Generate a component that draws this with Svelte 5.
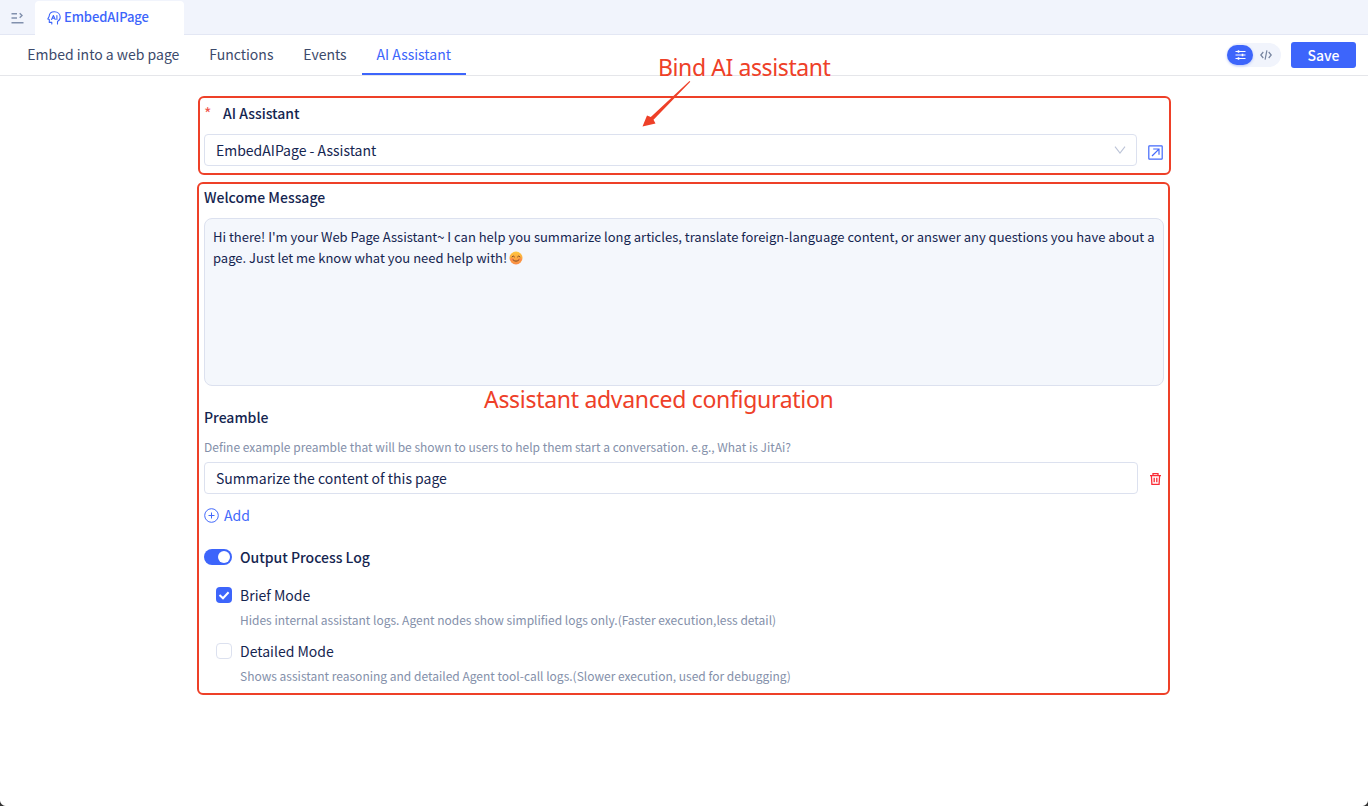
<script>
  const tabs = ['Embed into a web page', 'Functions', 'Events', 'AI Assistant'];
  const active = 'AI Assistant';
  const modes = [
    { name: 'Brief Mode', on: true, text: 'Hides internal assistant logs. Agent nodes show simplified logs only.(Faster execution,less detail)' },
    { name: 'Detailed Mode', on: false, text: 'Shows assistant reasoning and detailed Agent tool-call logs.(Slower execution, used for debugging)' }
  ];
</script>

<div class="page">
  <header class="tabbar">
    <div class="menu">
      <svg width="13" height="12" viewBox="0 0 13 12" fill="none" stroke="#8190ad" stroke-width="1.4">
        <path d="M0.5 1.7H6M0.5 6H6M0.5 10.8H12.5M8.7 1.2L11 3.5L8.7 5.8" />
      </svg>
    </div>
    <div class="file">
      <svg width="14" height="14" viewBox="0 0 14 14" fill="none" stroke="#3d65fb" stroke-width="1.1" stroke-linecap="round" stroke-linejoin="round">
        <path d="M4.8 13V11.4H2.3V8.6L.8 8L2.1 5.5C2.3 2.7 4.5.8 7.3.8C10.8.8 13.2 3 13.2 6.2C13.2 8.1 12.3 9.5 10.5 10.4V13" />
        <path d="M4.6 8.5L6.4 4.6L8.2 8.5M5.4 7.2H7.5M9.9 4.6V8.5" />
      </svg>
      <span>EmbedAIPage</span>
    </div>
    <div class="rest"></div>
  </header>

  <nav>
    <div class="tabs">
      {#each tabs as tab}
        <div class="tab" class:active={tab === active}>{tab}</div>
      {/each}
    </div>
    <div class="actions">
      <div class="switcher">
        <div class="pill">
          <svg width="11" height="10" viewBox="0 0 11 10" fill="none" stroke="#fff" stroke-width="1">
            <path d="M0.5 1.5H10.5M0.5 5H10.5M0.5 8.5H10.5" />
            <path d="M3.5 .2V2.8M7.5 3.7V6.3M3.5 7.2V9.8" stroke-width="1.6" />
          </svg>
        </div>
        <svg class="code" width="12" height="10" viewBox="0 0 12 10" fill="none" stroke="#76849f" stroke-width="1.2">
          <path d="M3.3 2L.8 5L3.3 8M8.7 2L11.2 5L8.7 8M6.9 .3L5.1 9.7" />
        </svg>
      </div>
      <button class="save">Save</button>
    </div>
  </nav>

  <main>
    <section class="bind">
      <div class="label"><i>*</i><b>AI Assistant</b></div>
      <div class="row">
        <div class="field select">
          <span>EmbedAIPage - Assistant</span>
          <svg width="12" height="8" viewBox="0 0 12 8" fill="none" stroke="#bcc4d8" stroke-width="1.1"><path d="M1 .7L6 7L11 .7" /></svg>
        </div>
        <svg class="open" width="15" height="15" viewBox="0 0 15 15" fill="none" stroke="#4369fb" stroke-width="1.2">
          <rect x=".8" y=".8" width="13.4" height="13.4" rx=".6" />
          <path d="M4 11L10.7 4.3M5.2 4H11V9.8" />
        </svg>
      </div>
    </section>

    <section class="config">
      <div class="label"><b>Welcome Message</b></div>
      <div class="message">Hi there! I'm your Web Page Assistant~ I can help you summarize long articles, translate foreign-language content, or answer any questions you have about a<br />page. Just let me know what you need help with!<svg class="smile" width="14" height="14" viewBox="0 0 14 14" fill="none">
          <defs><linearGradient id="face" x1="0" y1="0" x2="0" y2="1"><stop offset="0" stop-color="#ffc83d" /><stop offset="1" stop-color="#f98a45" /></linearGradient></defs>
          <circle cx="7" cy="7" r="6.5" fill="url(#face)" />
          <circle cx="3" cy="8.5" r="1.6" fill="#ff7d55" opacity=".6" /><circle cx="11" cy="8.5" r="1.6" fill="#ff7d55" opacity=".6" />
          <path d="M3 5.8Q4.3 4 5.5 5.8M8.5 5.8Q9.7 4 11 5.8M4 8.8Q7 11.8 10 8.8" stroke="#70401f" stroke-width=".9" stroke-linecap="round" />
        </svg></div>
      <div class="label preamble"><b>Preamble</b></div>
      <p class="hint">Define example preamble that will be shown to users to help them start a conversation. e.g., What is JitAi?</p>
      <div class="row">
        <div class="field text"><span>Summarize the content of this page</span></div>
        <svg class="trash" width="11" height="12" viewBox="0 0 11 12" fill="none" stroke="#fa2c36" stroke-width="1.3">
          <path d="M0 2.6H11M3 2.4V.7H8V2.4M1.4 2.8L1.9 11.3H9.1L9.6 2.8M4.2 4.7V9.3M6.8 4.7V9.3" />
        </svg>
      </div>
      <div class="add">
        <svg width="15" height="15" viewBox="0 0 15 15" fill="none" stroke="#4369fb" stroke-width="1"><circle cx="7.5" cy="7.5" r="6.8" /><path d="M4.5 7.5H10.5M7.5 4.5V10.5" /></svg>
        <span>Add</span>
      </div>
      <div class="log"><div class="toggle"><div class="knob"></div></div><b>Output Process Log</b></div>
      {#each modes as mode}
        <div class="mode">
          <div class="box" class:on={mode.on}>
            {#if mode.on}
              <svg width="16" height="16" viewBox="0 0 16 16" fill="none" stroke="#fff" stroke-width="2"><path d="M3.5 8L7 11.3L12.6 5.3" /></svg>
            {/if}
          </div>
          <div class="copy"><div class="name">{mode.name}</div><p class="hint">{mode.text}</p></div>
        </div>
      {/each}
    </section>
  </main>

  <div class="note first">Bind AI assistant</div>
  <svg class="arrow" width="50" height="48" viewBox="0 0 50 48" fill="#ee4028"><path d="M48.5 1L49.3 1.8L12.5 39.8L14.5 43.5L1.5 46.5L6 35.5L9.8 37Z" /></svg>
  <div class="note second">Assistant advanced configuration</div>
  <i class="corner left"></i>
  <i class="corner right"></i>
</div>

<style>
  :global(body) { margin: 0; background: #fff; }
  .page {
    position: relative; width: 1368px; height: 806px; overflow: hidden; background: #fff;
    font: 14px/22px "Noto Sans CJK SC", "Noto Sans", sans-serif; color: #152550;
  }
  .page * { box-sizing: border-box; }
  svg { display: block; flex: none; }
  p { margin: 0; }
  b { font-weight: 500; }
  i { font-style: normal; }
  .tabbar { display: flex; height: 35px; background: #f1f4fc; }
  .menu { width: 35px; padding: 12px 0 0 11px; border-bottom: 1px solid #e3e7f4; }
  .file { display: flex; gap: 3px; width: 149px; margin-top: 1px; padding: 10px 0 0 12px; background: #fff; border-radius: 4px 4px 0 0; color: #3d65fb; font-size: 13px; font-weight: 500; letter-spacing: -.1px; }
  .file span { line-height: 12px; height: 12px; }
  .rest { flex: 1; border-bottom: 1px solid #e3e7f4; }
  nav { display: flex; justify-content: space-between; height: 41px; border-bottom: 1px solid #e5e6ea; }
  .tabs { display: flex; padding-left: 12.4px; }
  .tab { height: 40px; padding: 8px 14.95px 0; color: #3c4a6b; white-space: nowrap; }
  .tab.active { color: #3d65fb; border-bottom: 2px solid #3d65fb; }
  .actions { display: flex; gap: 10px; padding: 7px 12px 0 0; }
  .switcher { display: flex; align-items: center; width: 54px; height: 24px; margin-top: 1px; border-radius: 12px; background: #f1f4fc; }
  .pill { display: flex; align-items: center; justify-content: center; width: 26px; height: 20px; border-radius: 10px; background: #3d65fb; box-shadow: 0 1px 3px #b9c6f8; }
  .code { margin-left: 7px; }
  .save { width: 65px; height: 26px; padding: 0; border: 0; border-radius: 3px; background: #3d65fb; color: #fff; font: 500 14px/26px "Noto Sans CJK SC", sans-serif; }
  main { display: flex; flex-direction: column; gap: 7px; padding: 20px 0 0 197px; }
  section { border: 2px solid #ee4028; border-radius: 6px; width: 973px; }
  .bind { height: 79px; margin-left: 1px; padding: 4px 4px; }
  .label { display: flex; height: 22px; }
  .label i { width: 19px; color: #f0564e; font-size: 16px; }
  .row { display: flex; align-items: center; }
  .field { display: flex; align-items: center; justify-content: space-between; width: 933px; height: 32px; padding: 0 10px 1px 11px; border: 1px solid #dce1ef; border-radius: 4px; }
  .bind .row { margin-top: 10px; }
  .open { margin: 4px 0 0 11px; }
  .config { height: 513px; padding: 2px 5px; }
  .message { width: 960px; height: 168px; margin-top: 10px; padding: 7px 8px; border: 1px solid #dce1ef; border-radius: 8px; background: #f4f7fc; font-size: 13px; line-height: 21px; white-space: nowrap; }
  .smile { display: inline-block; margin-left: 2px; vertical-align: -2px; }
  .preamble { margin-top: 20px; }
  .hint { color: #8490aa; font-size: 12px; line-height: 20px; white-space: nowrap; }
  .preamble + .hint { margin: 9px 0 5px; }
  .text { width: 934px; }
  .trash { margin: 1px 0 0 12px; }
  .add { display: flex; align-items: center; gap: 5px; height: 22px; margin-top: 10px; color: #4369fb; }
  .log { display: flex; align-items: center; gap: 8px; height: 22px; margin-top: 20px; }
  .toggle { display: flex; justify-content: flex-end; width: 28px; height: 16px; padding: 2px; border-radius: 8px; background: #3d65fb; }
  .knob { width: 12px; height: 12px; border-radius: 50%; background: #fff; }
  .mode { display: flex; gap: 8px; height: 56px; padding-left: 12px; }
  .log + .mode { margin-top: 16px; }
  .box { width: 16px; height: 16px; margin-top: 3px; border: 1px solid #dce1ef; border-radius: 4px; }
  .on { border: 0; background: #3d65fb; }
  .copy .hint { margin-top: 4px; }
  .note { position: absolute; color: #ee4028; font: 23px/30px "Noto Sans", sans-serif; white-space: nowrap; }
  .first { left: 658px; top: 52px; letter-spacing: -.4px; }
  .second { left: 484px; top: 384px; letter-spacing: -.3px; }
  .arrow { position: absolute; left: 641px; top: 80px; }
  .corner { position: absolute; bottom: 0; width: 6px; height: 6px; }
  .left { left: 0; background: radial-gradient(circle at 100% 0, transparent 5.5px, #333 6.5px); }
  .right { right: 0; background: radial-gradient(circle at 0 0, transparent 5.5px, #333 6.5px); }
</style>
